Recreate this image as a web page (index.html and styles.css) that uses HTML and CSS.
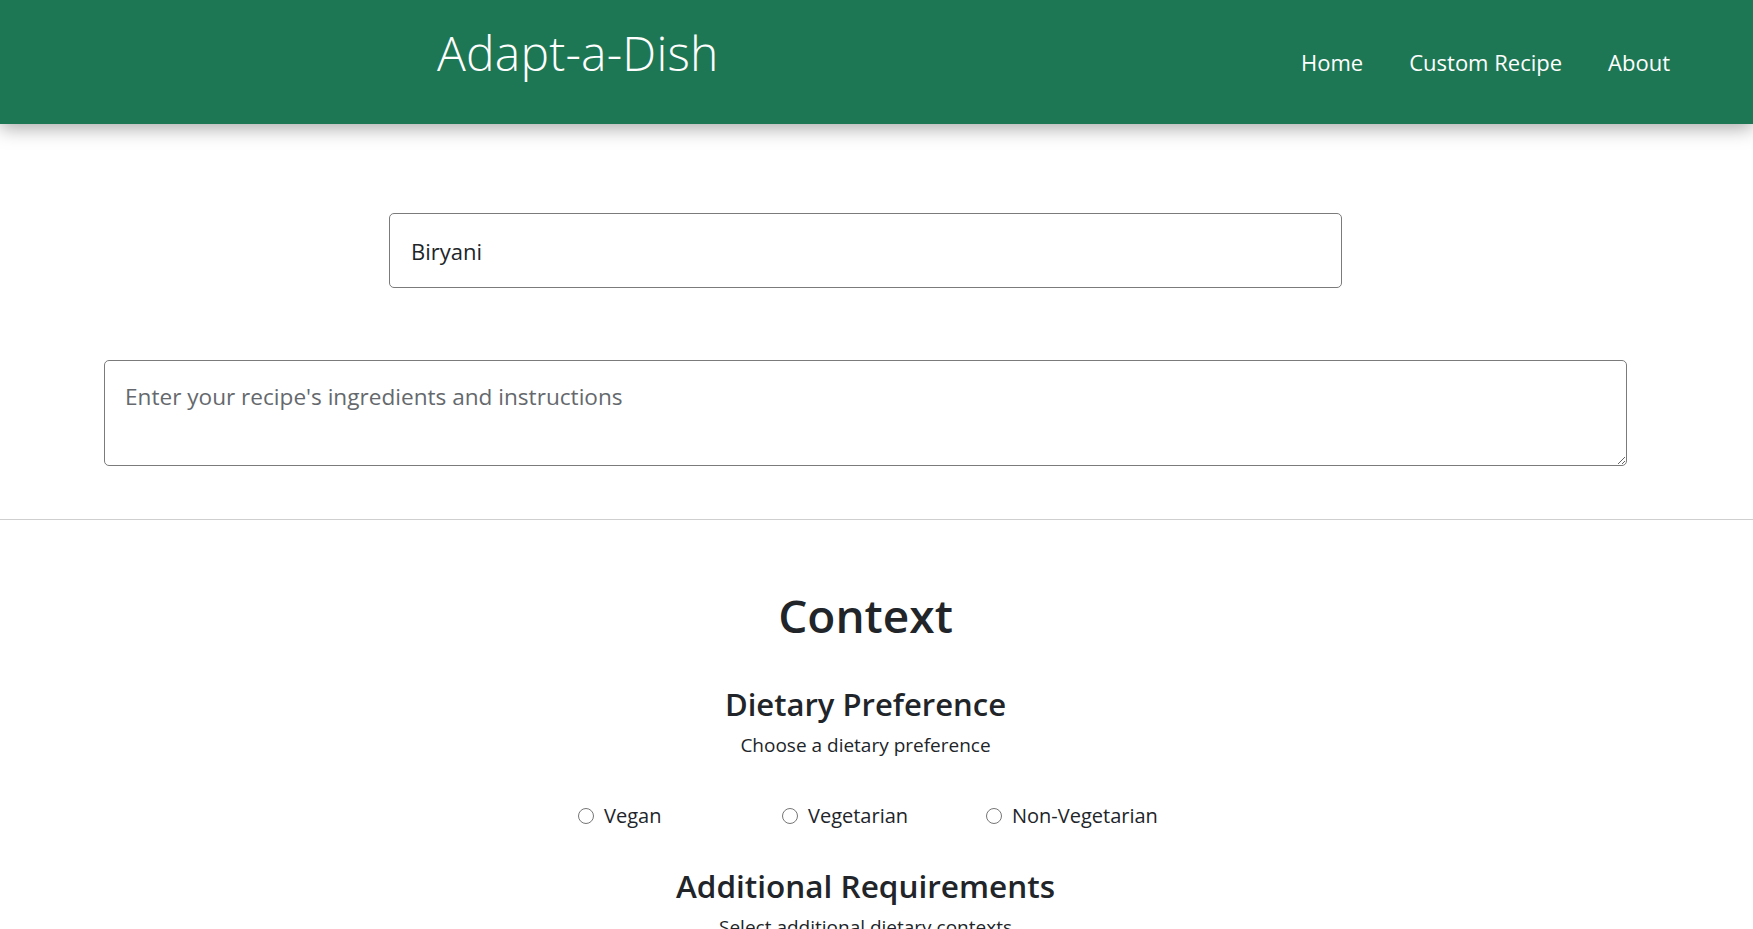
FILE: index.html
```html
<!DOCTYPE html>
<html lang="en">
<head>
<meta charset="utf-8">
<title>Adapt-a-Dish</title>
<link rel="stylesheet" href="styles.css">
</head>
<body>
<header class="topbar">
  <div class="brand">Adapt-a-Dish</div>
  <nav class="nav">
    <a class="nav-link" href="#">Home</a>
    <a class="nav-link" href="#">Custom Recipe</a>
    <a class="nav-link" href="#">About</a>
  </nav>
</header>

<main>
  <section class="recipe-form">
    <input class="name-input" type="text" value="Biryani">
    <textarea class="recipe-text" placeholder="Enter your recipe's ingredients and instructions"></textarea>
  </section>

  <hr class="divider">

  <section class="context">
    <h1 class="context-title">Context</h1>

    <h2 class="group-title">Dietary Preference</h2>
    <p class="group-sub">Choose a dietary preference</p>
    <div class="radio-row">
      <label class="radio-item"><input type="radio" name="diet"><span>Vegan</span></label>
      <label class="radio-item"><input type="radio" name="diet"><span>Vegetarian</span></label>
      <label class="radio-item"><input type="radio" name="diet"><span>Non-Vegetarian</span></label>
    </div>

    <h2 class="group-title group-title-2">Additional Requirements</h2>
    <p class="group-sub">Select additional dietary contexts</p>
  </section>
</main>
</body>
</html>
```

FILE: styles.css
```css
html, body {
  margin: 0;
  padding: 0;
  background: #ffffff;
}

body {
  font-family: "Open Sans", "Noto Sans", sans-serif;
  color: #212529;
}

.topbar {
  height: 124px;
  background: #1e7754;
  box-shadow: 0 4px 18px rgba(0, 0, 0, 0.35);
  display: flex;
  align-items: flex-start;
  justify-content: space-between;
  padding: 0 83px 0 437px;
  box-sizing: border-box;
  position: relative;
}

.brand {
  color: #ffffff;
  font-family: "Open Sans", sans-serif;
  font-weight: 300;
  font-size: 48px;
  line-height: 1;
  padding-top: 29px;
  letter-spacing: 0.2px;
}

.nav {
  display: flex;
  gap: 46px;
  padding-top: 51px;
}

.nav-link {
  color: #ffffff;
  text-decoration: none;
  font-family: "Open Sans", sans-serif;
  font-size: 22px;
  line-height: 1;
}

main {
  display: block;
}

.recipe-form {
  display: flex;
  flex-direction: column;
  align-items: center;
  padding: 89px 126px 0 104px;
}

.name-input {
  display: block;
  width: 953px;
  height: 75px;
  box-sizing: border-box;
  border: 1px solid #7b7b7b;
  border-radius: 5px;
  padding: 0 21px;
  font-family: "Open Sans", sans-serif;
  font-size: 22px;
  color: #212529;
  outline: none;
}

.recipe-text {
  display: block;
  margin-top: 72px;
  width: 100%;
  height: 106px;
  box-sizing: border-box;
  border: 1px solid #7b7b7b;
  border-radius: 5px;
  padding: 20px 20px;
  font-family: "Open Sans", sans-serif;
  font-size: 22.6px;
  color: #212529;
  outline: none;
  resize: vertical;
}

.recipe-text::placeholder {
  color: #65696d;
}

.divider {
  margin: 53px 0 0 0;
  border: 0;
  border-top: 1px solid #cfcfcf;
  height: 0;
}

.context {
  padding: 0 126px 0 104px;
  text-align: center;
}

.context-title {
  margin: 67px 0 0 0;
  font-size: 46px;
  font-weight: 600;
  line-height: 56px;
}

.group-title {
  margin: 41px 0 0 0;
  font-size: 31px;
  font-weight: 600;
  line-height: 40px;
}

.group-sub {
  margin: 8px 0 0 0;
  font-size: 19px;
  line-height: 26px;
}

.radio-row {
  display: flex;
  justify-content: flex-start;
  padding-left: 474px;
  margin-top: 45px;
}

.radio-item {
  width: 204px;
  text-align: left;
  display: flex;
  align-items: center;
  gap: 10px;
  font-size: 20px;
  line-height: 26px;
}

.radio-item input {
  margin: 0;
  width: 16px;
  height: 16px;
}

.group-title-2 {
  margin-top: 37px;
  font-size: 31.5px;
}
```
